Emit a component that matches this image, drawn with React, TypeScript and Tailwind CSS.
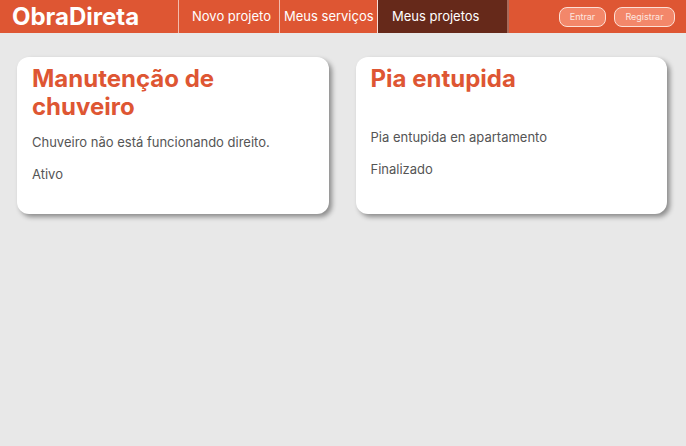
import { useState } from 'react';

interface Projeto {
  id: number;
  titulo: string;
  descricao: string;
  status: string;
}

const projetos: Projeto[] = [
  { id: 1, titulo: 'Manutenção de chuveiro', descricao: 'Chuveiro não está funcionando direito.', status: 'Ativo' },
  { id: 2, titulo: 'Pia entupida', descricao: 'Pia entupida en apartamento', status: 'Finalizado' },
];

function Navbar() {
  const [active] = useState('Meus projetos');

  return (
    <header className="flex h-[33px] items-stretch bg-[#de5633] text-white">
      <div className="w-[178px] pl-3 flex items-center text-[24px] font-bold leading-none">ObraDireta</div>
      <nav className="flex items-stretch border-l border-white/60 whitespace-nowrap">
        <a className="w-[101px] pl-[13px] flex items-center text-[13px] border-r border-white/60">Novo projeto</a>
        <a className="w-[98px] pl-[4px] flex items-center text-[13px] border-r border-white/80">Meus serviços</a>
        <a
          className={
            active === 'Meus projetos'
              ? 'w-[131px] pl-[14px] flex items-center text-[13px] bg-[#66291a] border-r-2 border-[#a86a5a]'
              : 'w-[131px] pl-[14px] flex items-center text-[13px]'
          }
        >
          Meus projetos
        </a>
      </nav>
      <div className="ml-auto flex items-center gap-2 pr-[11px]">
        <button className="h-[20px] w-[47px] rounded-lg border border-[#fde0d6] bg-[#f3876a] text-[9px] text-[#fde8e0]">Entrar</button>
        <button className="h-[20px] w-[61px] rounded-lg border border-[#fde0d6] bg-[#f3876a] text-[9px] text-[#fde8e0]">Registrar</button>
      </div>
    </header>
  );
}

function App() {
  return (
    <div className="min-h-[446px] bg-[#e8e8e8]" style={{ fontFamily: 'Inter, "Noto Sans", sans-serif' }}>
      <Navbar />
      <main className="grid grid-cols-2 gap-[27px] pl-[17px] pr-[19px] pt-6">
        {projetos.map(p => (
          <div
            key={p.id}
            className="h-[157px] rounded-xl bg-white px-[15px] pt-[8px] shadow-[3px_3px_5px_rgba(0,0,0,0.4)]"
          >
            <h2
              className={
                p.id === 1
                  ? 'text-[24px] leading-[28px] font-bold text-[#de5633] mb-[11px]'
                  : 'text-[24px] leading-[28px] font-bold text-[#de5633] mb-[34px]'
              }
            >
              {p.titulo}
            </h2>
            <p className="text-[13px] leading-5 text-[#555]">{p.descricao}</p>
            <p className="mt-3 text-[13px] leading-5 text-[#555]">{p.status}</p>
          </div>
        ))}
      </main>
    </div>
  );
}

export default App;
